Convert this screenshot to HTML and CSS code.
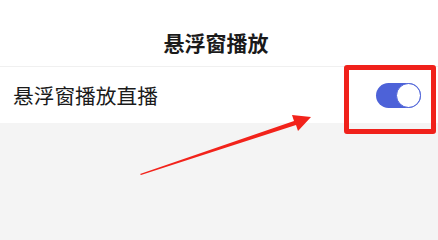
FILE: index.html
```html
<!DOCTYPE html>
<html lang="zh">
<head>
<meta charset="utf-8">
<link rel="stylesheet" href="styles.css">
</head>
<body>
<div class="page">
  <header class="header">悬浮窗播放</header>
  <div class="row">
    <span class="label">悬浮窗播放直播</span>
    <span class="toggle"><span class="knob"></span></span>
  </div>
  <div class="highlight"></div>
  <svg class="arrow" width="438" height="208" viewBox="0 0 438 208">
    <polygon points="140,174 294,121 292,115 311,117 298,131 296,125 141,175" fill="#f2231b"/>
  </svg>
</div>
</body>
</html>
```
FILE: styles.css
```css
html, body {
  margin: 0;
  padding: 0;
  background: #f4f4f4;
}
.page {
  position: relative;
  width: 438px;
  height: 208px;
  overflow: hidden;
  font-family: "Noto Sans CJK SC", "Noto Sans", sans-serif;
  color: #1a1a1a;
}
.header {
  background: #fff;
  height: 67px;
  box-sizing: border-box;
  padding-top: 18px;
  padding-right: 6px;
  line-height: 48px;
  text-align: center;
  font-size: 21px;
  font-weight: bold;
  border-bottom: 1px solid #f0f0f0;
}
.row {
  background: #fff;
  height: 56px;
  display: flex;
  align-items: center;
  justify-content: space-between;
  padding: 0 17px 0 13px;
}
.label {
  font-size: 20.7px;
  line-height: 1;
}
.toggle {
  width: 45px;
  height: 25px;
  border-radius: 13px;
  background: #4d62d8;
  display: flex;
  justify-content: flex-end;
  margin-top: 1px;
}
.knob {
  width: 25px;
  height: 25px;
  box-sizing: border-box;
  border-radius: 50%;
  background: #fff;
  border: 1.5px solid #4d62d8;
}
.highlight {
  position: absolute;
  left: 344px;
  top: 65px;
  width: 92px;
  height: 69px;
  box-sizing: border-box;
  border: 5px solid #f0211b;
  border-radius: 3px;
}
.arrow {
  position: absolute;
  left: 0;
  top: 0;
}
```
